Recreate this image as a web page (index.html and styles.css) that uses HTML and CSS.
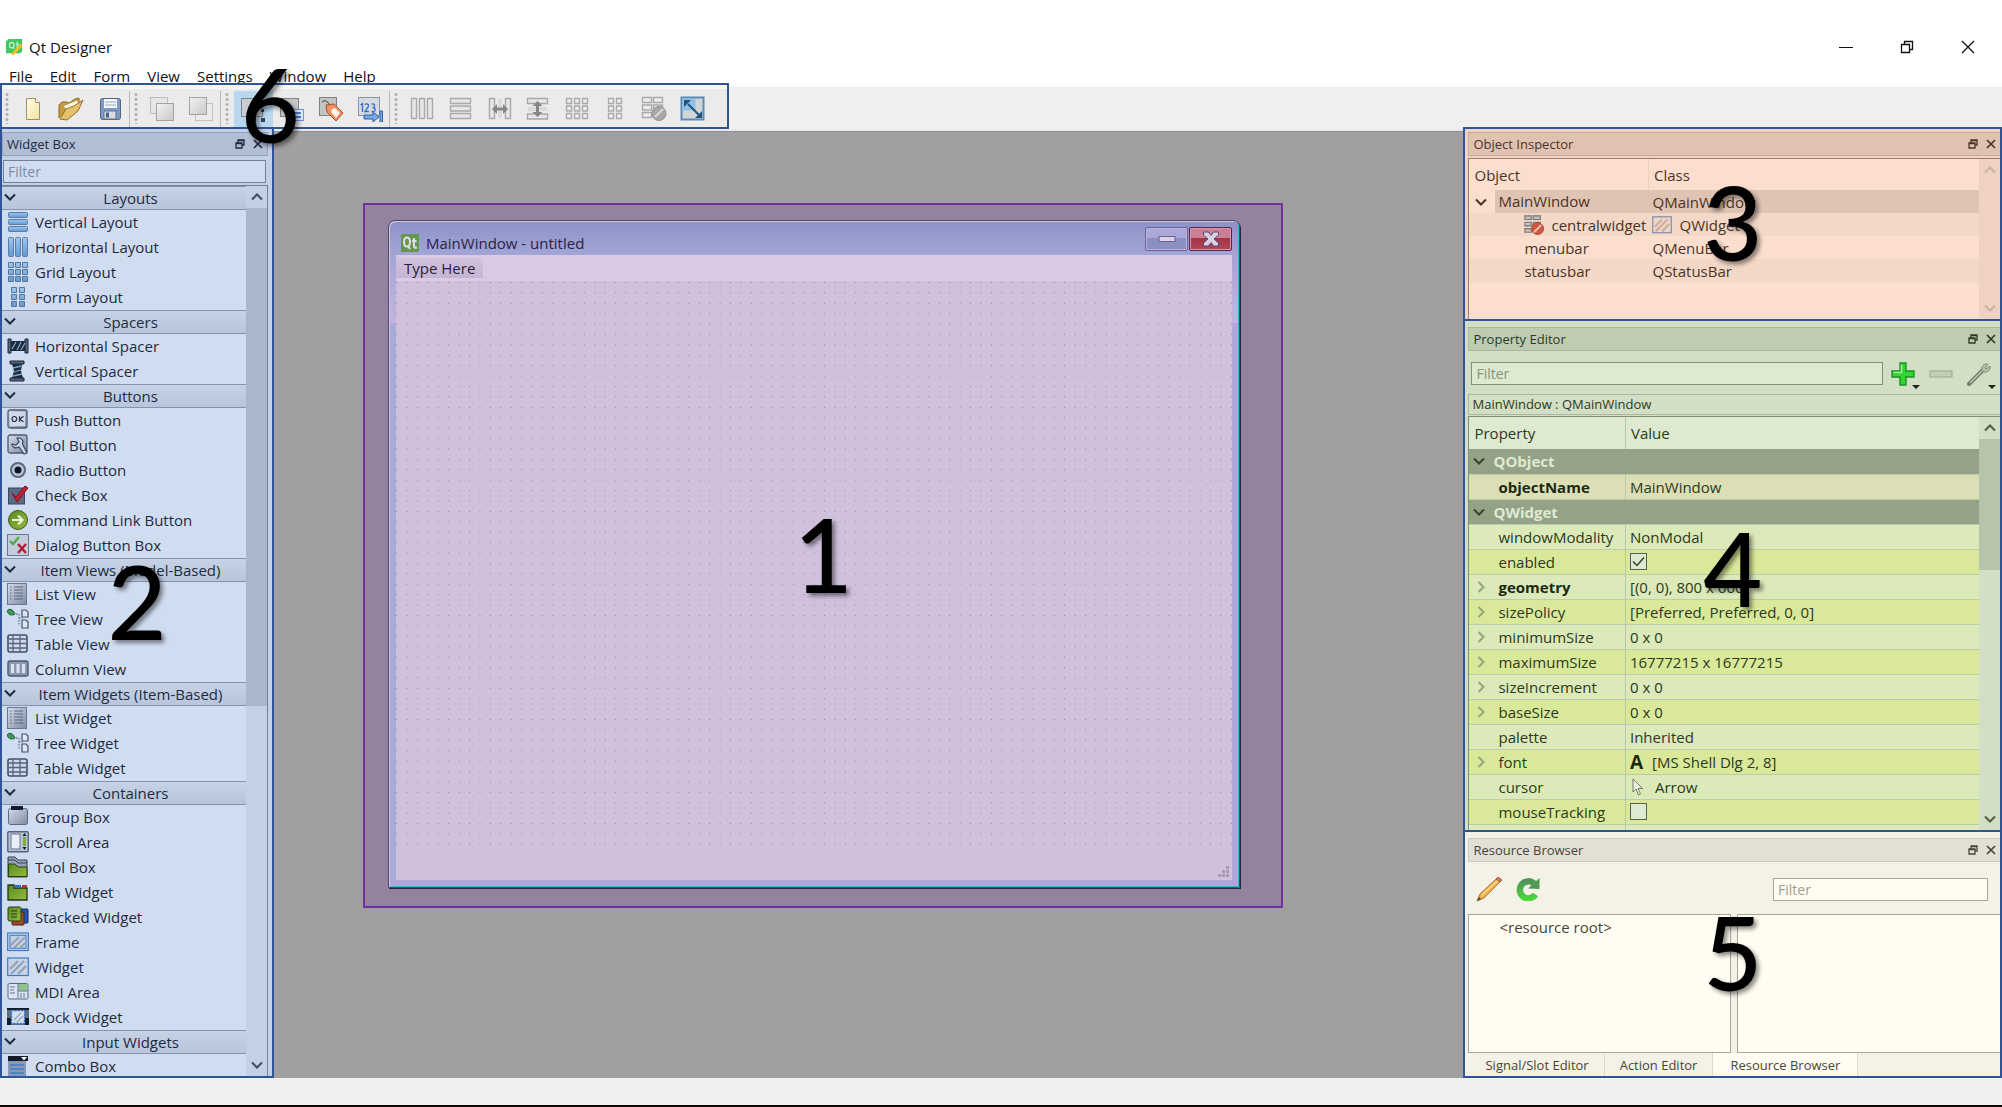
FILE: index.html
```html
<!DOCTYPE html>
<html lang="en">
<head>
<meta charset="utf-8">
<meta name="viewport" content="width=device-width, initial-scale=1">
<title>Qt Designer</title>
<link rel="stylesheet" href="styles.css">
</head>
<body>
<svg class="sprite" aria-hidden="true">
  <defs>
    <linearGradient id="gBlue" x1="0" y1="0" x2="0" y2="1"><stop offset="0" stop-color="#9cc8ef"/><stop offset="1" stop-color="#6199d2"/></linearGradient>
    <linearGradient id="gGrey" x1="0" y1="0" x2="1" y2="1"><stop offset="0" stop-color="#f2f2f2"/><stop offset="1" stop-color="#c9c9c9"/></linearGradient>
    <linearGradient id="gSteel" x1="0" y1="0" x2="1" y2="1"><stop offset="0" stop-color="#d3dceb"/><stop offset="1" stop-color="#7f8ba0"/></linearGradient>
    <linearGradient id="gGreen" x1="0" y1="0" x2="1" y2="1"><stop offset="0" stop-color="#5c8a25"/><stop offset="1" stop-color="#93bb3a"/></linearGradient>
    <linearGradient id="gYellow" x1="0" y1="0" x2="1" y2="1"><stop offset="0" stop-color="#fffde8"/><stop offset="1" stop-color="#f1e3a0"/></linearGradient>
    <linearGradient id="gReload" x1="0" y1="0" x2="0" y2="1"><stop offset="0" stop-color="#4f9458"/><stop offset="1" stop-color="#4cd63a"/></linearGradient>
  </defs>
  <symbol id="chev-down" viewBox="0 0 12 12"><path d="M1 3.500l5 5 5-5" fill="none" stroke="currentColor" stroke-width="2"/></symbol>
  <symbol id="chev-up" viewBox="0 0 12 12"><path d="M1 8.500l5-5 5 5" fill="none" stroke="currentColor" stroke-width="2"/></symbol>
  <symbol id="chev-right" viewBox="0 0 12 12"><path d="M3.500 1l5 5-5 5" fill="none" stroke="currentColor" stroke-width="2"/></symbol>
  <symbol id="float" viewBox="0 0 10 10"><path d="M3 4V1h6v5H7M3 1.500h6M1 4h6v5H1zM1 4.500h6" fill="none" stroke="currentColor" stroke-width="1.300"/></symbol>
  <symbol id="close" viewBox="0 0 10 10"><path d="M1 1l8 8M9 1l-8 8" fill="none" stroke="currentColor" stroke-width="1.700"/></symbol>

  <symbol id="lay-v" viewBox="0 0 22 22"><g fill="url(#gBlue)" stroke="#5c7ba8"><rect x="1.500" y="1.500" width="19" height="5" rx="1"/><rect x="1.500" y="8.500" width="19" height="5" rx="1"/><rect x="1.500" y="15.500" width="19" height="5" rx="1"/></g></symbol>
  <symbol id="lay-h" viewBox="0 0 22 22"><g fill="url(#gBlue)" stroke="#5c7ba8"><rect x="1.500" y="1.500" width="5" height="19" rx="1"/><rect x="8.500" y="1.500" width="5" height="19" rx="1"/><rect x="15.500" y="1.500" width="5" height="19" rx="1"/></g></symbol>
  <symbol id="lay-g" viewBox="0 0 22 22"><path d="M1.500 1.500h5v5h-5zM8.500 1.500h5v5h-5zM15.500 1.500h5v5h-5zM1.500 8.500h5v5h-5zM8.500 8.500h5v5h-5zM15.500 8.500h5v5h-5zM1.500 15.500h5v5h-5zM8.500 15.500h5v5h-5zM15.500 15.500h5v5h-5z" fill="url(#gBlue)" stroke="#56759f" stroke-linejoin="round"/></symbol>
  <symbol id="lay-f" viewBox="0 0 22 22"><path d="M4.500 1.500h5v5h-5zM12.500 1.500h5v5h-5zM4.500 8.500h5v5h-5zM12.500 8.500h5v5h-5zM4.500 15.500h5v5h-5zM12.500 15.500h5v5h-5z" fill="url(#gBlue)" stroke="#56759f" stroke-linejoin="round"/></symbol>
  <symbol id="sp-h" viewBox="0 0 22 22"><path d="M1 4h3v14H1zM18 4h3v14h-3z" fill="#55637a" stroke="#1c2838"/><path d="M4 6h14v10H4z" fill="#1b2a3c"/><path d="M5 14l4-7M10 15l4-8M14 15l4-7" stroke="#7fa6cc" stroke-width="1.300"/></symbol>
  <symbol id="sp-v" viewBox="0 0 22 22"><path d="M3 1h14v3H3zM3 18h14v3H3z" fill="#55637a" stroke="#1c2838"/><path d="M5 4h10l-1 7 2 7H5l2-7z" fill="#1b2a3c"/><path d="M6 8l8-2M7 12l7-2M6 16l9-2" stroke="#7fa6cc" stroke-width="1.300"/></symbol>
  <symbol id="b-push" viewBox="0 0 22 22"><rect x="1" y="1" width="19" height="18" rx="2" fill="url(#gSteel)" stroke="#4e5a6e" stroke-width="1.300"/><rect x="3" y="3" width="15" height="14" fill="#cfdaea"/><ellipse cx="7.300" cy="10" rx="2.300" ry="2.500" fill="none" stroke="#222f42" stroke-width="1.200"/><path d="M12.500 7.200v5.600M16.500 7.200l-4 3 4 2.600" fill="none" stroke="#222f42" stroke-width="1.200"/></symbol>
  <symbol id="b-tool" viewBox="0 0 22 22"><rect x="1" y="1" width="19" height="18" rx="2" fill="url(#gSteel)" stroke="#4e5a6e" stroke-width="1.300"/><path d="M10 4c4-1 7 2 5.500 6L20 19l-3 1-5-7c-4 2-7 0-7-3l4 1 3-3z" fill="#c7d3e6" stroke="#3a475d" stroke-width="1.200"/></symbol>
  <symbol id="b-radio" viewBox="0 0 22 22"><circle cx="11" cy="11" r="7" fill="#bcc7d8" stroke="#5c687c" stroke-width="2"/><circle cx="11" cy="11" r="3.500" fill="#0d1522"/></symbol>
  <symbol id="b-check" viewBox="0 0 22 22"><rect x="1.500" y="4" width="16" height="16" fill="#5c6b84" stroke="#39475f"/><path d="M5 9l4 4L18 2l3 2-11 14z" fill="#c4203a" stroke="#7d1022"/></symbol>
  <symbol id="b-link" viewBox="0 0 22 22"><circle cx="11" cy="11" r="9.500" fill="url(#gGreen)" stroke="#3f5a22"/><path d="M5 11h10M11 6.500l4.500 4.500-4.500 4.500" fill="none" stroke="#eaf4e0" stroke-width="2.200"/></symbol>
  <symbol id="b-dialog" viewBox="0 0 22 22"><rect x=".5" y=".5" width="21" height="21" fill="#c2ccdc" stroke="#6a7890"/><path d="M3 7l3 3 6-7" fill="none" stroke="#4ea844" stroke-width="2.400"/><path d="M11 10l8 9M19 10l-8 9" stroke="#b32038" stroke-width="2.600"/></symbol>
  <symbol id="v-list" viewBox="0 0 22 22"><rect x=".5" y=".5" width="19" height="21" fill="url(#gSteel)" stroke="#6b7890"/><path d="M3 4h1.500M3 7h1.500M3 10h1.500M3 13h1.500M3 16h1.500M7 4h9M7 7h9M7 10h9M7 13h9M7 16h9" stroke="#5a6880"/></symbol>
  <symbol id="v-tree" viewBox="0 0 22 22"><path d="M0 3c2-3 6-2 8 3-3 2-7 1-8-3z" fill="#3d9a56" stroke="#1e5a3a"/><path d="M9 6h3v11M12 10h4" fill="none" stroke="#4c586c" stroke-dasharray="1.500 1.500"/><path d="M15 2h4l2 2v5h-6zM15 12h4l2 2v6h-6z" fill="#dde5f2" stroke="#46546b" stroke-width="1.200"/></symbol>
  <symbol id="v-table" viewBox="0 0 22 22"><rect x="1" y="2" width="19" height="17" rx="2" fill="#cfd9ea" stroke="#42506a" stroke-width="1.600"/><path d="M2 6h18M2 10.500h18M2 15h18M6 2v17M13 2v17" stroke="#56647c" stroke-width="1.300"/></symbol>
  <symbol id="v-column" viewBox="0 0 22 22"><rect x="1" y="3" width="20" height="15" rx="2" fill="#8b99b0" stroke="#4b5a73" stroke-width="1.400"/><path d="M4 6h3v9H4zM9.500 6h3v9h-3zM15 6h3v9h-3z" fill="#dae4f3"/></symbol>
  <symbol id="c-group" viewBox="0 0 22 22"><rect x="1.500" y="2.500" width="19" height="16" rx="2" fill="url(#gSteel)" stroke="#5c6980"/><path d="M4 0h12v4H4z" fill="#131c2b"/></symbol>
  <symbol id="c-scroll" viewBox="0 0 22 22"><rect x=".8" y=".8" width="20.400" height="20" rx="1" fill="#b9c4d6" stroke="#55627a" stroke-width="1.400"/><rect x="4" y="3" width="9" height="15" fill="#e9effa" stroke="#68758c"/><path d="M16 6h3v9h-3z" fill="#7cae2f"/><path d="M17.500 2l2 3h-4zM17.500 19l2-3h-4z" fill="#111b29"/></symbol>
  <symbol id="c-tool" viewBox="0 0 22 22"><path d="M1 1h7l3 3h9v17H1z" fill="#95a2b8" stroke="#333f54"/><path d="M1 4h7l3 3h9" fill="none" stroke="#333f54"/><path d="M1.500 8h6l4 3h8.500v9.500H1.500z" fill="url(#gGreen)" stroke="#2b4312"/></symbol>
  <symbol id="c-tab" viewBox="0 0 22 22"><path d="M1 4h6v3h13v12H1z" fill="url(#gGreen)" stroke="#24351a" stroke-width="1.300"/><path d="M8 4h6v3H8z" fill="#2e6fc4"/><path d="M15 4h5v3h-5z" fill="#b5303a"/></symbol>
  <symbol id="c-stack" viewBox="0 0 22 22"><rect x="12" y="3" width="9" height="14" rx="1" fill="#1f56c0" stroke="#14264d"/><rect x="5" y="6" width="12" height="13" rx="1" fill="#a84524" stroke="#4d1f14"/><rect x="1" y="1" width="13" height="14" rx="1.500" fill="url(#gGreen)" stroke="#243a18"/><path d="M4 5h6M4 8h6M4 11h6" stroke="#25401a"/></symbol>
  <symbol id="c-frame" viewBox="0 0 22 22"><rect x=".7" y="2" width="20.600" height="17.500" fill="#c6d9f2" stroke="#3e78c2" stroke-width="1.200"/><rect x="3" y="4.300" width="16" height="13" fill="#c7d2e3" stroke="#3e78c2"/><path d="M4 14l8-8M7 17l11-11M13 17l5-5" stroke="#94a4bd" stroke-width="2.200"/></symbol>
  <symbol id="c-widget" viewBox="0 0 22 22"><rect x=".7" y="2" width="20.600" height="17.500" fill="#c9d5e7" stroke="#3e78c2" stroke-width="1.200"/><path d="M3 13l8-8M4 18L17 5M11 18l8-8" stroke="#94a4bd" stroke-width="2.400"/></symbol>
  <symbol id="c-mdi" viewBox="0 0 22 22"><rect x="1" y="2.500" width="20" height="15.500" rx="1.500" fill="#dbe4f1" stroke="#5b6a84"/><path d="M11 3h9.500v7H11z" fill="#93c08f"/><path d="M3 6h5M3 9h4M3 12h5M11 10h10M11 3v15M14 12v5M17 12v5" stroke="#67789a"/></symbol>
  <symbol id="c-dock" viewBox="0 0 22 22"><path d="M0 2h22v17H0z" fill="#5b6e89"/><path d="M0 2h22v2H0zM0 12h4v7H0zM18 12h4v7h-4z" fill="#121c2c"/><rect x="4.500" y="4.500" width="13" height="13" fill="#d5dfee" stroke="#2f6fc8" stroke-width="1.300" stroke-dasharray="2 1.200"/><path d="M7 14l7-7M10 16l6-6" stroke="#9aaac2" stroke-width="1.600"/></symbol>
  <symbol id="i-combo" viewBox="0 0 22 22"><path d="M1 1h20v5H1z" fill="#121b2a"/><path d="M14 2h6l-3 3.500z" fill="#fff"/><path d="M1 6h18v16H1z" fill="#8a99b1"/><path d="M3 10h14M3 14h14M3 18h14" stroke="#4d84cc" stroke-width="2"/></symbol>

  <symbol id="t-new" viewBox="0 0 26 26"><path d="M6.500 2.500h9l4 4v17h-13z" fill="url(#gYellow)" stroke="#a3905a"/><path d="M15.500 2.500v4h4" fill="#fff" stroke="#a3905a"/></symbol>
  <symbol id="t-open" viewBox="0 0 26 26"><path d="M1 22V9l3-3h5l2 1 6-4 4-1v5" fill="#c69a3e" stroke="#8a6a25"/><path d="M5 10l14-6 3 5-10 9z" fill="#fdf6dc" stroke="#b79a5c"/><path d="M2 23l6-10 8-3 9-6-5 11-11 9z" fill="#e5c26b" stroke="#93702c"/></symbol>
  <symbol id="t-save" viewBox="0 0 26 26"><rect x="3.500" y="2.500" width="20" height="21" rx="2" fill="#7b9cc6" stroke="#52657f"/><path d="M7 3h13v9H7z" fill="#f2f4f7"/><path d="M8 6h11M8 9h11" stroke="#9fb0c4"/><path d="M7 15h12v8H7z" fill="#d9dde2" stroke="#61738c"/><path d="M9 16.500h3v5H9z" fill="#45618a"/></symbol>
  <symbol id="t-lower" viewBox="0 0 26 26"><rect x="1.500" y="1.500" width="17" height="16" fill="#e6e6e6" stroke="#bdbdbd"/><rect x="7.500" y="7.500" width="17" height="17" fill="url(#gGrey)" stroke="#a3a3a3"/></symbol>
  <symbol id="t-raise" viewBox="0 0 26 26"><rect x="7.500" y="7.500" width="17" height="17" fill="#ececec" stroke="#c3c3c3"/><rect x="1.500" y="1.500" width="17" height="17" fill="url(#gGrey)" stroke="#a3a3a3"/></symbol>
  <symbol id="t-edit" viewBox="0 0 26 26"><rect x="1.500" y="2.500" width="21" height="18" fill="#c9ced4" stroke="#7d8690"/><path d="M21 13h3v3h-3zM21 22h4v4h-4zM12 22h4v3h-4z" fill="#38424e"/></symbol>
  <symbol id="t-signal" viewBox="0 0 26 26"><rect x="1.500" y="2.500" width="18" height="18" fill="#c8c8c8" stroke="#838383"/><rect x="10.500" y="13.500" width="14" height="11" fill="#dfe9f7" stroke="#6f96cd"/><path d="M13 17h9M13 21h9" stroke="#4d7fc7" stroke-width="2"/></symbol>
  <symbol id="t-buddy" viewBox="0 0 26 26"><rect x="1.500" y="1.500" width="17" height="18" fill="#c4c4c4" stroke="#808080"/><path d="M4 6c4-3 6 0 8 4" fill="none" stroke="#333"/><path d="M8 9l8-1 9 9-7 8L9 16z" fill="#f0905f" stroke="#a8532d"/><path d="M14 13l3-1 5 5-4 5-5-6z" fill="#fff2e8"/></symbol>
  <symbol id="t-tab" viewBox="0 0 26 26"><rect x="1.500" y="1.500" width="21" height="18" fill="#d7dadf" stroke="#8a93a3"/><path d="M3.500 9l2-1.500V16M8 8.500c3-2 5 1 2 4L8 15.500h4M14.500 8c4-1 4 3.500 1 3.500 4 0 3.500 5-1 4" fill="none" stroke="#2f6fc4" stroke-width="1.300"/><path d="M7 19h9v-3l6 5-6 5v-3H7zM23 15h2.500v11H23z" fill="#79abea" stroke="#2e5fa6"/></symbol>
  <symbol id="g-h" viewBox="0 0 26 26"><path d="M2.500 2.500h5v20h-5zM10.500 2.500h5v20h-5zM18.500 2.500h5v20h-5z" fill="#e6e6e6" stroke="#a9a9a9" stroke-width="1.400" stroke-linejoin="round"/></symbol>
  <symbol id="g-v" viewBox="0 0 26 26"><path d="M2.500 2.500h20v5h-20zM2.500 10h20v5h-20zM2.500 17.500h20v5h-20z" fill="#e6e6e6" stroke="#a9a9a9" stroke-width="1.400" stroke-linejoin="round"/></symbol>
  <symbol id="g-hs" viewBox="0 0 26 26"><path d="M2.500 2.500h5v20h-5zM18.500 2.500h5v20h-5z" fill="#e6e6e6" stroke="#a9a9a9" stroke-width="1.400"/><path d="M12 3v19M14 3v19" stroke="#c9c9c9"/><path d="M5 13l5-5v3.500h6V8l5 5-5 5v-3.500h-6V18z" fill="#858585"/></symbol>
  <symbol id="g-vs" viewBox="0 0 26 26"><path d="M2.500 2.500h20v5h-20zM2.500 18h20v5h-20z" fill="#e6e6e6" stroke="#a9a9a9" stroke-width="1.400"/><path d="M3 12h19M3 14h19" stroke="#c9c9c9"/><path d="M12.500 5l5 5H14v6h3.500l-5 5-5-5H11v-6H7.500z" fill="#858585"/></symbol>
  <symbol id="g-g" viewBox="0 0 26 26"><path d="M2.500 2.500h5v5h-5zM10.500 2.500h5v5h-5zM18.500 2.500h5v5h-5zM2.500 10h5v5h-5zM10.500 10h5v5h-5zM18.500 10h5v5h-5zM2.500 17.500h5v5h-5zM10.500 17.500h5v5h-5zM18.500 17.500h5v5h-5z" fill="#ededed" stroke="#a9a9a9" stroke-width="1.400" stroke-linejoin="round"/></symbol>
  <symbol id="g-f" viewBox="0 0 26 26"><path d="M6.500 2.500h5v5h-5zM14.500 2.500h5v5h-5zM6.500 10h5v5h-5zM14.500 10h5v5h-5zM6.500 17.500h5v5h-5zM14.500 17.500h5v5h-5z" fill="#ededed" stroke="#a9a9a9" stroke-width="1.400" stroke-linejoin="round"/></symbol>
  <symbol id="g-break" viewBox="0 0 26 26"><path d="M1.500 1.500h9v5h-9zM12.500 1.500h9v5h-9zM1.500 9h9v5h-9zM12.500 9h9v5h-9zM1.500 16.500h9v5h-9z" fill="#ededed" stroke="#a9a9a9" stroke-width="1.400"/><circle cx="18" cy="17.500" r="7" fill="#a8a8a8" stroke="#8f8f8f"/><path d="M14 21l8-8" stroke="#dcdcdc" stroke-width="2"/></symbol>
  <symbol id="g-adjust" viewBox="0 0 26 26"><rect x="1.500" y="1.500" width="22" height="22" fill="#d2d4d6" stroke="#5b8ab2" stroke-width="2"/><path d="M2.500 2.500h13v12h-13z" fill="#8fc0ea"/><path d="M8 8l11 11" stroke="#1e5680" stroke-width="2"/><path d="M4 4h7l-7 7zM22 22h-7l7-7z" fill="#1e5680"/></symbol>

  <symbol id="o-break" viewBox="0 0 22 22"><path d="M1 1h7v4H1zM10 1h8v4h-8zM1 8h7v4H1zM10 8h8v4h-8zM1 15h7v4H1z" fill="#b9c3c6" stroke="#7f7472" stroke-width="1.200"/><circle cx="15" cy="15" r="6.500" fill="#cf5a44" stroke="#a83c2b"/><path d="M11 19l8-8" stroke="#f0b8a6" stroke-width="2.200"/></symbol>
  <symbol id="o-widget" viewBox="0 0 22 22"><rect x=".8" y="2" width="20.400" height="17.500" fill="#efd6c8" stroke="#7d8dab" stroke-width="1.300"/><path d="M3 13l8-8M4 18L17 5M11 18l8-8" stroke="#cfae9c" stroke-width="2.400"/></symbol>
  <symbol id="plus" viewBox="0 0 24 24"><path d="M9 1h6v8h8v6h-8v8H9v-8H1V9h8z" fill="#35d435" stroke="#16961f" stroke-width="1.400"/><path d="M10.500 2.500v8h-8" fill="none" stroke="#a7f29c" stroke-width="1.500"/></symbol>
  <symbol id="minus" viewBox="0 0 24 24"><rect x="1" y="9" width="22" height="6" fill="#c3d0b7" stroke="#98a68d"/></symbol>
  <symbol id="wrench" viewBox="0 0 24 24"><path d="M2 22L16 8" stroke="#6f7d68" stroke-width="4" stroke-linecap="round"/><path d="M3 21L15 9" stroke="#c0ccb6" stroke-width="1.500"/><path d="M15 9c-1-4 2-8 6-7l-3 4 1 1 4-3c1 4-3 7-6 6z" fill="#b7c4ad" stroke="#7b8973"/></symbol>
  <symbol id="pencil" viewBox="0 0 26 26"><path d="M1 25l3-7L20 3l4 3L8 22z" fill="#f0b04a" stroke="#a87a34"/><path d="M6 19L22 4.500" stroke="#fbdc92" stroke-width="1.500"/><path d="M20 3l2-2 4 3-2 2z" fill="#d9795f" stroke="#a55a48"/><path d="M1 25l2-4 2 2z" fill="#4b463a"/></symbol>
  <symbol id="reload" viewBox="0 0 24 24"><path d="M19.500 17.500a8.500 8.500 0 1 1-1.500-11" fill="none" stroke="url(#gReload)" stroke-width="6.500"/><path d="M12 11.500L23.500 12V1z" fill="#4f9a55"/></symbol>
  <symbol id="cursor" viewBox="0 0 14 18"><path d="M2 1v13l3-3 2.500 6 2-1L7 10.500h4.500z" fill="#eef5e4" stroke="#6e7c64"/></symbol>
  <symbol id="qt" viewBox="0 0 20 20"><path d="M4 1h15v14l-2 2H1V4z" fill="#43c65e"/><path d="M5 8c0-4 5-4 5 0s-5 4-5 0M8.500 10l2 2M13.500 4v8M12 7h4" fill="none" stroke="#c4f0ca" stroke-width="1.400"/><path d="M6 19L17 6l2 3-9 10z" fill="#f3c22c"/></symbol>
  <symbol id="qt-green" viewBox="0 0 18 18"><path d="M1 0h17v17l-1 1H0V1z" fill="#67974f"/><path d="M3 8c0-6 6-6 6 0s-6 6-6 0M7 12l2 3M13 4v8c0 2 1 2 3 1.500M11 7h4.500" fill="none" stroke="#e3dcec" stroke-width="2"/></symbol>
</svg>

<div class="app">
  <header class="titlebar">
    <svg class="i18"><use href="#qt"/></svg>
    <h1 class="app-name">Qt Designer</h1>
    <div class="win-controls">
      <button aria-label="Minimize"><svg class="i14" viewBox="0 0 14 14"><path d="M0 7.500h14" stroke="#111"/></svg></button>
      <button aria-label="Restore"><svg class="i14" viewBox="0 0 14 14"><path d="M1.500 4.500h8v8h-8zM4.500 4.500v-3h8v8h-3" fill="none" stroke="#111" stroke-width="1.300"/></svg></button>
      <button aria-label="Close"><svg class="i14" viewBox="0 0 14 14"><path d="M1 1l12 12M13 1L1 13" stroke="#111" stroke-width="1.300"/></svg></button>
    </div>
  </header>
  <nav class="menubar" aria-label="Main menu">
    <button>File</button><button>Edit</button><button>Form</button><button>View</button><button>Settings</button><button>Window</button><button>Help</button>
  </nav>
  <div class="toolbar-row">
    <div class="toolbar" role="toolbar" aria-label="Tools">
      <span class="grip"></span>
      <div class="tools three">
        <button aria-label="New"><svg class="i26"><use href="#t-new"/></svg></button>
        <button aria-label="Open"><svg class="i26"><use href="#t-open"/></svg></button>
        <button aria-label="Save"><svg class="i26"><use href="#t-save"/></svg></button>
      </div>
      <span class="sep"></span><span class="grip"></span>
      <div class="tools two">
        <button aria-label="Send to back"><svg class="i26"><use href="#t-lower"/></svg></button>
        <button aria-label="Bring to front"><svg class="i26"><use href="#t-raise"/></svg></button>
      </div>
      <span class="sep"></span><span class="grip"></span>
      <div class="tools four">
        <button class="on" aria-label="Edit widgets"><svg class="i26"><use href="#t-edit"/></svg></button>
        <button aria-label="Edit signals and slots"><svg class="i26"><use href="#t-signal"/></svg></button>
        <button aria-label="Edit buddies"><svg class="i26"><use href="#t-buddy"/></svg></button>
        <button aria-label="Edit tab order"><svg class="i26"><use href="#t-tab"/></svg></button>
      </div>
      <span class="sep"></span><span class="grip"></span>
      <div class="tools eight">
        <button aria-label="Lay out horizontally"><svg class="i26"><use href="#g-h"/></svg></button>
        <button aria-label="Lay out vertically"><svg class="i26"><use href="#g-v"/></svg></button>
        <button aria-label="Horizontal splitter"><svg class="i26"><use href="#g-hs"/></svg></button>
        <button aria-label="Vertical splitter"><svg class="i26"><use href="#g-vs"/></svg></button>
        <button aria-label="Grid"><svg class="i26"><use href="#g-g"/></svg></button>
        <button aria-label="Form layout"><svg class="i26"><use href="#g-f"/></svg></button>
        <button aria-label="Break layout"><svg class="i26"><use href="#g-break"/></svg></button>
        <button aria-label="Adjust size"><svg class="i26"><use href="#g-adjust"/></svg></button>
      </div>
      <span class="mark mark-tools">6</span>
    </div>
  </div>

  <main class="workspace">
    <section class="dock blue">
      <div class="dock-title"><h2>Widget Box</h2><button aria-label="Float"><svg class="i10"><use href="#float"/></svg></button><button aria-label="Close"><svg class="i10"><use href="#close"/></svg></button></div>
      <div class="dock-filter"><input type="text" placeholder="Filter" aria-label="Filter widgets"></div>
      <div class="scroller">
        <div class="widget-list">
          <h3><svg class="i12"><use href="#chev-down"/></svg>Layouts</h3>
          <ul>
            <li><svg class="i22"><use href="#lay-v"/></svg>Vertical Layout</li>
            <li><svg class="i22"><use href="#lay-h"/></svg>Horizontal Layout</li>
            <li><svg class="i22"><use href="#lay-g"/></svg>Grid Layout</li>
            <li><svg class="i22"><use href="#lay-f"/></svg>Form Layout</li>
          </ul>
          <h3><svg class="i12"><use href="#chev-down"/></svg>Spacers</h3>
          <ul>
            <li><svg class="i22"><use href="#sp-h"/></svg>Horizontal Spacer</li>
            <li><svg class="i22"><use href="#sp-v"/></svg>Vertical Spacer</li>
          </ul>
          <h3><svg class="i12"><use href="#chev-down"/></svg>Buttons</h3>
          <ul>
            <li><svg class="i22"><use href="#b-push"/></svg>Push Button</li>
            <li><svg class="i22"><use href="#b-tool"/></svg>Tool Button</li>
            <li><svg class="i22"><use href="#b-radio"/></svg>Radio Button</li>
            <li><svg class="i22"><use href="#b-check"/></svg>Check Box</li>
            <li><svg class="i22"><use href="#b-link"/></svg>Command Link Button</li>
            <li><svg class="i22"><use href="#b-dialog"/></svg>Dialog Button Box</li>
          </ul>
          <h3><svg class="i12"><use href="#chev-down"/></svg>Item Views (Model-Based)</h3>
          <ul>
            <li><svg class="i22"><use href="#v-list"/></svg>List View</li>
            <li><svg class="i22"><use href="#v-tree"/></svg>Tree View</li>
            <li><svg class="i22"><use href="#v-table"/></svg>Table View</li>
            <li><svg class="i22"><use href="#v-column"/></svg>Column View</li>
          </ul>
          <h3><svg class="i12"><use href="#chev-down"/></svg>Item Widgets (Item-Based)</h3>
          <ul>
            <li><svg class="i22"><use href="#v-list"/></svg>List Widget</li>
            <li><svg class="i22"><use href="#v-tree"/></svg>Tree Widget</li>
            <li><svg class="i22"><use href="#v-table"/></svg>Table Widget</li>
          </ul>
          <h3><svg class="i12"><use href="#chev-down"/></svg>Containers</h3>
          <ul>
            <li><svg class="i22"><use href="#c-group"/></svg>Group Box</li>
            <li><svg class="i22"><use href="#c-scroll"/></svg>Scroll Area</li>
            <li><svg class="i22"><use href="#c-tool"/></svg>Tool Box</li>
            <li><svg class="i22"><use href="#c-tab"/></svg>Tab Widget</li>
            <li><svg class="i22"><use href="#c-stack"/></svg>Stacked Widget</li>
            <li><svg class="i22"><use href="#c-frame"/></svg>Frame</li>
            <li><svg class="i22"><use href="#c-widget"/></svg>Widget</li>
            <li><svg class="i22"><use href="#c-mdi"/></svg>MDI Area</li>
            <li><svg class="i22"><use href="#c-dock"/></svg>Dock Widget</li>
          </ul>
          <h3><svg class="i12"><use href="#chev-down"/></svg>Input Widgets</h3>
          <ul>
            <li><svg class="i22"><use href="#i-combo"/></svg>Combo Box</li>
          </ul>
        </div>
        <div class="scrollbar"><svg class="i12"><use href="#chev-up"/></svg><span class="thumb"></span><svg class="i12"><use href="#chev-down"/></svg></div>
      </div>
      <span class="mark">2</span>
    </section>

    <section class="desktop">
      <div class="highlight">
        <div class="form-window">
          <div class="form-title">
            <svg class="i18"><use href="#qt-green"/></svg>
            <h2>MainWindow - untitled</h2>
            <button class="form-min" aria-label="Minimize"><svg class="i18" viewBox="0 0 18 18"><rect x="1" y="6.500" width="16" height="5" fill="#dcd3e6" stroke="#6a5f92"/></svg></button>
            <button class="form-close" aria-label="Close"><svg class="i18" viewBox="0 0 18 18"><path d="M1.500 2h5L9 5.500 11.500 2h5v3L12 9l4.500 4v3h-5L9 12.500 6.500 16h-5v-3L6 9 1.500 5z" fill="#d9d0e2" stroke="#574a78"/></svg></button>
          </div>
          <div class="form-body">
            <div class="form-menu"><button>Type Here</button></div>
            <div class="form-grid"></div>
            <div class="form-status"><svg class="i12" viewBox="0 0 12 12"><path d="M8 0h3v3H8zM4 4h3v3H4zM8 4h3v3H8zM0 8h3v3H0zM4 8h3v3H4zM8 8h3v3H8z" fill="#a898b8"/></svg></div>
          </div>
        </div>
        <span class="mark">1</span>
      </div>
    </section>

    <div class="side">
      <section class="dock orange">
        <div class="dock-title"><h2>Object Inspector</h2><button aria-label="Float"><svg class="i10"><use href="#float"/></svg></button><button aria-label="Close"><svg class="i10"><use href="#close"/></svg></button></div>
        <div class="scroller">
          <table class="objects">
            <thead><tr><th>Object</th><th>Class</th></tr></thead>
            <tbody>
              <tr class="selected"><td><span class="cell"><svg class="i12"><use href="#chev-down"/></svg><span class="name">MainWindow</span></span></td><td>QMainWindow</td></tr>
              <tr><td><span class="cell child"><svg class="i20"><use href="#o-break"/></svg>centralwidget</span></td><td><span class="cell"><svg class="i20"><use href="#o-widget"/></svg>QWidget</span></td></tr>
              <tr><td><span class="cell child">menubar</span></td><td>QMenuBar</td></tr>
              <tr><td><span class="cell child">statusbar</span></td><td>QStatusBar</td></tr>
            </tbody>
          </table>
          <div class="scrollbar idle"><svg class="i12"><use href="#chev-up"/></svg><svg class="i12"><use href="#chev-down"/></svg></div>
        </div>
        <span class="mark">3</span>
      </section>

      <section class="dock green">
        <div class="dock-title"><h2>Property Editor</h2><button aria-label="Float"><svg class="i10"><use href="#float"/></svg></button><button aria-label="Close"><svg class="i10"><use href="#close"/></svg></button></div>
        <div class="prop-tools">
          <input type="text" placeholder="Filter" aria-label="Filter properties">
          <button class="drop" aria-label="Add dynamic property"><svg class="i24"><use href="#plus"/></svg></button>
          <button aria-label="Remove dynamic property"><svg class="i24"><use href="#minus"/></svg></button>
          <button class="drop" aria-label="Configure"><svg class="i24"><use href="#wrench"/></svg></button>
        </div>
        <p class="prop-target">MainWindow : QMainWindow</p>
        <div class="scroller">
          <table class="props">
            <thead><tr><th>Property</th><th>Value</th></tr></thead>
            <tbody>
              <tr class="group"><th colspan="2"><span class="cell"><svg class="i12"><use href="#chev-down"/></svg>QObject</span></th></tr>
              <tr class="cream"><td><span class="cell"><b>objectName</b></span></td><td>MainWindow</td></tr>
              <tr class="group"><th colspan="2"><span class="cell"><svg class="i12"><use href="#chev-down"/></svg>QWidget</span></th></tr>
              <tr><td><span class="cell">windowModality</span></td><td>NonModal</td></tr>
              <tr class="alt"><td><label class="cell" for="p-enabled">enabled</label></td><td><input type="checkbox" id="p-enabled" checked></td></tr>
              <tr><td><span class="cell"><svg class="i12"><use href="#chev-right"/></svg><b>geometry</b></span></td><td>[(0, 0), 800 x 600]</td></tr>
              <tr class="alt"><td><span class="cell"><svg class="i12"><use href="#chev-right"/></svg>sizePolicy</span></td><td>[Preferred, Preferred, 0, 0]</td></tr>
              <tr><td><span class="cell"><svg class="i12"><use href="#chev-right"/></svg>minimumSize</span></td><td>0 x 0</td></tr>
              <tr class="alt"><td><span class="cell"><svg class="i12"><use href="#chev-right"/></svg>maximumSize</span></td><td>16777215 x 16777215</td></tr>
              <tr><td><span class="cell"><svg class="i12"><use href="#chev-right"/></svg>sizeIncrement</span></td><td>0 x 0</td></tr>
              <tr class="alt"><td><span class="cell"><svg class="i12"><use href="#chev-right"/></svg>baseSize</span></td><td>0 x 0</td></tr>
              <tr><td><span class="cell">palette</span></td><td>Inherited</td></tr>
              <tr class="alt"><td><span class="cell"><svg class="i12"><use href="#chev-right"/></svg>font</span></td><td><span class="value"><b class="font-a">A</b>[MS Shell Dlg 2, 8]</span></td></tr>
              <tr><td><span class="cell">cursor</span></td><td><span class="value"><svg class="i16"><use href="#cursor"/></svg>Arrow</span></td></tr>
              <tr class="alt"><td><label class="cell" for="p-mouse">mouseTracking</label></td><td><input type="checkbox" id="p-mouse"></td></tr>
              <tr><td></td><td></td></tr>
            </tbody>
          </table>
          <div class="scrollbar"><svg class="i12"><use href="#chev-up"/></svg><span class="thumb"></span><svg class="i12"><use href="#chev-down"/></svg></div>
        </div>
        <span class="mark">4</span>
      </section>

      <section class="dock yellow">
        <div class="dock-title"><h2>Resource Browser</h2><button aria-label="Float"><svg class="i10"><use href="#float"/></svg></button><button aria-label="Close"><svg class="i10"><use href="#close"/></svg></button></div>
        <div class="res-tools">
          <button aria-label="Edit resources"><svg class="i26"><use href="#pencil"/></svg></button>
          <button aria-label="Reload"><svg class="i24"><use href="#reload"/></svg></button>
          <input type="text" placeholder="Filter" aria-label="Filter resources">
        </div>
        <div class="res-panes"><div class="pane">&lt;resource root&gt;</div><div class="pane"></div></div>
        <div class="tabs" role="tablist">
          <button role="tab">Signal/Slot Editor</button><button role="tab">Action Editor</button><button role="tab" class="current" aria-selected="true">Resource Browser</button>
        </div>
        <span class="mark">5</span>
      </section>
    </div>
  </main>
  <footer class="statusbar"></footer>
</div>
</body>
</html>
```
FILE: styles.css
```css
* { box-sizing: border-box; }
body {
  margin: 0;
  font-family: "Open Sans", "Noto Sans", sans-serif;
  font-size: 15px;
  line-height: 20px;
  color: #111;
  background: #fff;
}
h1, h2, h3, p, ul { margin: 0; padding: 0; font-weight: 400; font-size: inherit; }
ul { list-style: none; }
button { margin: 0; padding: 0; border: 0; background: none; font: inherit; color: inherit; }
svg { flex: none; display: block; }
.sprite { position: absolute; width: 0; height: 0; }
.i10 { width: 10px; height: 10px; }
.i12 { width: 12px; height: 12px; }
.i14 { width: 14px; height: 14px; }
.i16 { width: 16px; height: 18px; }
.i18 { width: 18px; height: 18px; }
.i20 { width: 20px; height: 20px; }
.i22 { width: 22px; height: 22px; }
.i24 { width: 24px; height: 24px; }
.i26 { width: 26px; height: 26px; }

.app { display: flex; flex-direction: column; height: 100vh; overflow: hidden; }

/* window chrome */
.titlebar { display: flex; align-items: center; gap: 6px; height: 66px; padding: 28px 27px 0 5px; }
.app-name { flex: 1; }
.win-controls { display: flex; gap: 47px; }
.menubar { display: flex; gap: 17px; height: 17px; padding-left: 9px; align-items: flex-start; }

/* toolbar */
.toolbar-row { height: 46px; flex: none; background: linear-gradient(#fbfbfb 4px, #efefef 4px); position: relative; z-index: 3; }
.toolbar { position: relative; display: flex; align-items: stretch; width: 729px; max-width: 100%; height: 46px; padding: 6px 0 0 3px; border: 2px solid #2f5597; background: linear-gradient(#f6f6f6 4px, #ebebeb 4px); }
.tools { display: flex; align-items: stretch; }
.tools button { flex: 1; display: flex; align-items: center; justify-content: center; }
.tools .on { background: #b9d7ee; }
.three { width: 115px; }
.two { width: 77px; }
.four { width: 155px; }
.eight { width: 309px; }
.grip { width: 9px; margin: 1px 0 3px; background: radial-gradient(circle, #b0b0b0 1px, transparent 2px) 0 0 / 4px 5px repeat-y; }
.sep { width: 5px; border-left: 1px solid #b9b9b9; }

/* numbered markers over each area */
.mark {
  position: absolute; z-index: 5; left: 50%; top: 50%;
  transform: translate(-50%, -50%);
  padding-bottom: 4px;
  font-family: Lato, "Open Sans", sans-serif; font-size: 102px; line-height: 102px; font-weight: 500;
  color: #000; text-shadow: 3px 3px 4px rgba(0, 0, 0, .45);
  pointer-events: none;
}
.mark-tools { left: 37%; }
.green .mark { top: 49%; }

/* docks */
.workspace { flex: 1; min-height: 0; display: flex; }
.dock { position: relative; display: flex; flex-direction: column; overflow: hidden; border: 2px solid #2f5597; background: var(--chrome); color: var(--ink); }
.dock-title { display: flex; align-items: center; gap: 8px; height: 24px; flex: none; padding: 0 4px; border: 1px solid var(--soft); background: var(--title); font-size: 13px; }
.dock-title h2 { flex: 1; }
.scroller { flex: 1; min-height: 0; display: flex; overflow: hidden; align-items: flex-start; border-top: 1px solid var(--line); background: var(--list); }
.scrollbar { width: 21px; flex: none; align-self: stretch; display: flex; flex-direction: column; align-items: center; padding: 5px 0; gap: 5px; background: var(--chrome); }
.scrollbar .thumb { width: 100%; background: var(--title); }
.scrollbar svg:last-child { margin-top: auto; }
input[type="text"] { display: block; height: 23px; min-width: 0; padding: 0 4px; border: 1px solid var(--line); outline: 0; border-radius: 0; background: var(--list); font: inherit; font-size: 14px; color: inherit; }
input::placeholder { color: var(--hint); opacity: 1; }

.blue { --chrome: #c3d0e5; --title: #b1bed4; --list: #d0ddf1; --line: #71809b; --soft: #94a3be; --ink: #1d2b42; --hint: #7d8aa2; width: 274px; flex: none; border-top: 0; padding: 3px 4px 0 0; }
.blue .dock-filter { padding: 4px 2px 2px 1px; }
.blue .dock-filter input { width: 100%; }
.blue .scroller { border-right: 1px solid var(--line); }
.blue .thumb { height: 498px; background: #a9b6cb; }
.blue .scrollbar svg { color: #3f4c62; }
.widget-list { flex: 1; min-width: 0; }
.widget-list h3 { display: flex; align-items: center; justify-content: center; height: 24px; padding-left: 13px; position: relative; border-top: 1px solid #8493ae; border-bottom: 1px solid #8493ae; background: linear-gradient(#c6d2e6, #b8c5da); }
.widget-list h3 svg { position: absolute; left: 2px; top: 4px; }
.widget-list li { display: flex; align-items: center; gap: 6px; height: 25px; padding: 0 0 2px 5px; }

/* form canvas */
.desktop { flex: 1; min-width: 0; display: flex; padding: 72px 180px 170px 89px; border-top: 2px solid #eaeaea; background: #a0a0a0; box-shadow: inset 0 1px 0 #8b8b93; }
.highlight { flex: 1; position: relative; display: flex; padding: 15px 41px 18px 23px; border: 2px solid #7030a0; background: #94839e; }
.form-window {
  flex: 1; display: flex; flex-direction: column; padding: 0 7px 7px 7px;
  border: 1px solid #54446a; border-radius: 7px 7px 0 0;
  box-shadow: inset 1px 1px 0 #d3c8e6, inset -1px -1px 0 #3fb0e6, 1px 1px 0 #2a2440;
  background: linear-gradient(#8c92c6, #a3a5d6 34px, #c0b6de 102px, #a6abdb 102px);
}
.form-title { display: flex; align-items: center; gap: 7px; height: 34px; padding: 10px 0 0 5px; }
.form-title h2 { flex: 1; color: #2a2245; }
.form-min, .form-close { display: flex; align-items: center; justify-content: center; width: 43px; height: 24px; border: 1px solid #6d639a; border-radius: 2px; margin-bottom: 8px; background: linear-gradient(#aaa8d8 45%, #8b8fc2 45%); box-shadow: inset 0 0 0 1px #b9b3de; }
.form-close { margin-left: -6px; border-color: #5b2346; background: linear-gradient(#c98095 45%, #a33348 45%, #b0495a); box-shadow: inset 0 0 0 1px #d79aab; }
.form-body { flex: 1; display: flex; flex-direction: column; background: #d0c0db; }
.form-menu { height: 26px; padding: 3px 0; background: #dbcae6; }
.form-menu button { height: 20px; padding: 0 8px; background: linear-gradient(#d3c2de, #c6b5d2); color: #2a2038; }
.form-grid { flex: 1; background: conic-gradient(from 270deg at 1px 1px, #8f7d9c 90deg, transparent 90deg) 0 1px / 1.25% calc(100% / 55); }
.form-status { display: flex; align-items: flex-end; justify-content: flex-end; height: 26px; padding: 2px; }

/* right column */
.side { width: 26.9%; flex: none; display: flex; flex-direction: column; margin-top: -2px; z-index: 4; }
.side .dock { padding-left: 3px; min-height: 0; }
.side .dock-title { border-right: 0; }
.side .scroller { border-left: 1px solid var(--line); }
table { flex: 1; border-collapse: collapse; table-layout: fixed; }
td, th { padding: 0 0 0 4px; text-align: left; font-weight: 400; white-space: nowrap; }
.cell { display: flex; align-items: center; }

.orange { --chrome: #efd2c2; --title: #dfc2b2; --list: #fbdecd; --line: #9b8072; --soft: #cba998; --ink: #4b3427; flex: 194 1 194px; padding-top: 3px; }
.orange .scroller { margin-top: 2px; }
.objects th { height: 31px; padding-left: 5px; }
.objects th:first-child { width: 179px; border-right: 1px solid #ecd0c0; }
.objects td { height: 23px; }
.objects tbody tr:nth-child(even) { background: #f3d7c7; }
.objects .selected td + td { background: #dfc3b3; }
.objects .selected td:first-child { padding-left: 6px; }
.objects .name { flex: 1; margin-left: 8px; padding-left: 3px; line-height: 23px; background: #dfc3b3; }
.objects .cell { gap: 0; }
.objects .cell .i20 { margin-right: 7px; }
.child { padding-left: 51px; }
.idle { justify-content: space-between; color: #cdb2a3; padding-bottom: 5px; }

.green { --chrome: #d2dfc6; --title: #bfccb4; --list: #dde9d1; --line: #819075; --soft: #aab89f; --ink: #2b3a20; --hint: #87957c; flex: 511 1 511px; border-top: 0; padding-top: 6px; }
.prop-tools { display: flex; align-items: center; height: 43px; flex: none; padding: 2px 9px 0 3px; gap: 14px; }
.prop-tools input { flex: 1; margin-right: -6px; }
.prop-tools button { position: relative; }
.drop::after { content: ""; position: absolute; right: -5px; bottom: -3px; border: 4px solid transparent; border-top-color: #1a2611; border-bottom: 0; }
.prop-target { height: 21px; flex: none; padding-left: 3px; border: 1px solid var(--soft); border-right: 0; font-size: 13px; line-height: 19px; }
.green .scroller { margin-top: 1px; }
.props thead th { height: 32px; padding-left: 5px; }
.props th:first-child { width: 156px; }
.props td:first-child, .props thead th:first-child { border-right: 1px solid #b8c6ac; }
.props tbody tr { background: #dce9b8; border-bottom: 1px solid #bdcbaf; }
.props tbody tr.alt { background: #dae999; }
.props tbody tr.cream { background: #dcdfb6; }
.props tbody tr.group { background: #94a287; }
.props td, .group th { height: 25px; }
.props td .cell { padding-left: 25px; }
.props td .cell svg { margin: 0 11px 0 -23px; color: #97a57f; }
.props td b { font-weight: 700; color: #1b2a10; }
.group th { color: #dfead3; font-weight: 700; }
.group .cell { gap: 8px; color: #dfead3; }
.group svg { color: #35442a; }
.value { display: flex; align-items: center; gap: 9px; }
.props td .font-a { font-size: 19px; line-height: 20px; }
input[type="checkbox"] { appearance: none; display: block; width: 17px; height: 17px; margin: 0; border: 1px solid #54624a; background: #dde9d1; }
input[type="checkbox"]:checked { background: #dde9d1 url("data:image/svg+xml,%3Csvg xmlns='http://www.w3.org/2000/svg' viewBox='0 0 15 15'%3E%3Cpath d='M2 7.500l4 4 7-8' fill='none' stroke='%2335442a' stroke-width='1.500'/%3E%3C/svg%3E"); }
.green .thumb { height: 131px; background: #b6c4ab; }
.green .scrollbar svg { color: #4c5b41; }

.yellow { --chrome: #f4f1e7; --title: #e2e0d5; --list: #fffdf1; --line: #a6a599; --soft: #cbc9be; --ink: #474538; --hint: #a09e92; flex: 246 1 246px; border-top: 0; padding-top: 6px; }
.res-tools { display: flex; align-items: center; gap: 14px; height: 52px; flex: none; padding: 2px 12px 0 8px; }
.res-tools input { width: 215px; margin-left: auto; }
.res-panes { flex: 1; display: grid; grid-template-columns: 1fr 1fr; gap: 6px; min-height: 0; }
.pane { border: 1px solid var(--line); background: var(--list); padding: 2px 30px; }
.pane + .pane { border-right: 0; }
.tabs { display: flex; height: 23px; flex: none; padding-left: 2px; font-size: 13px; }
.tabs button { padding: 0 15px; border-right: 1px solid #dcdad0; }
.tabs .current { padding: 0 17px; background: var(--list); }

.statusbar { height: 29px; flex: none; background: #f0f0f0; border-bottom: 2px solid #0b0805; }
```
